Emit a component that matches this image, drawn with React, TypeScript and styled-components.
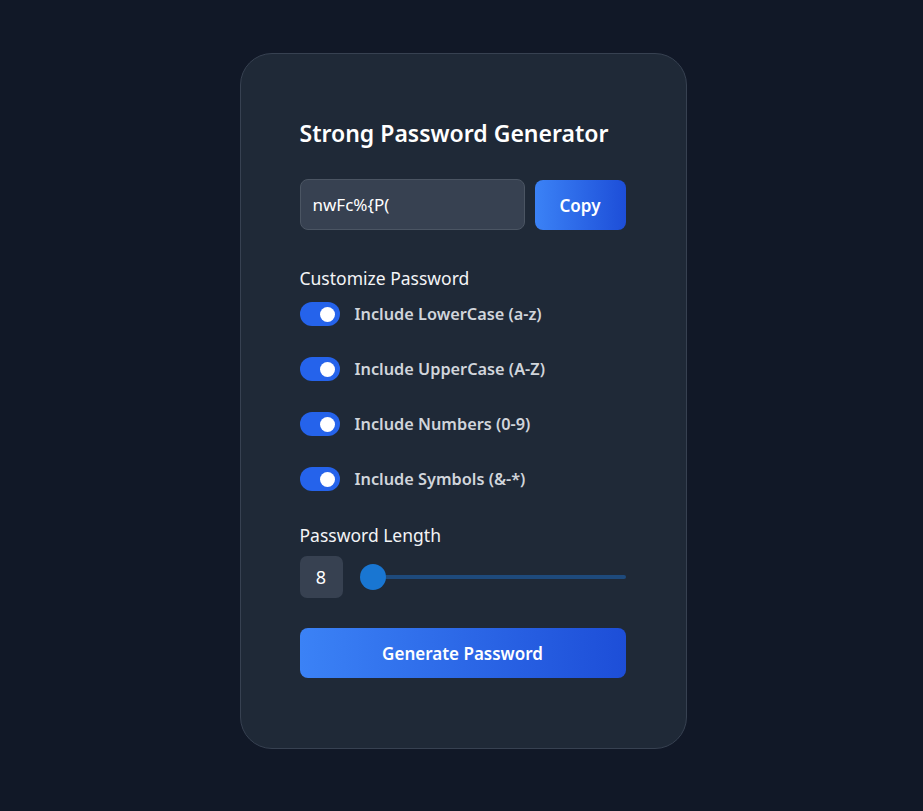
import React, { useState } from "react";
import styled, { createGlobalStyle } from "styled-components";

const Global = createGlobalStyle`
  html, body { margin: 0; padding: 0; background: #111827; }
  body { font-family: "Noto Sans", "Open Sans", sans-serif; }
  * { box-sizing: border-box; }
`;

const Page = styled.div`
  min-height: 811px;
  display: flex;
  justify-content: center;
  padding: 53px 0 0 3px;
`;

const Card = styled.div`
  width: 447px;
  height: 696px;
  background: #1f2937;
  border: 1px solid #374151;
  border-radius: 32px;
  padding: 59px 60px 0 59px;
  display: flex;
  flex-direction: column;
`;

const Title = styled.h1`
  margin: 0;
  font-size: 23px;
  font-weight: 600;
  color: #ffffff;
  line-height: 40px;
`;

const Row = styled.div`
  display: flex;
  gap: 10px;
  margin-top: 26px;
`;

const PwInput = styled.input`
  flex: 1;
  min-width: 0;
  height: 51px;
  background: #374151;
  border: 1px solid #4b5563;
  border-radius: 8px;
  color: #ffffff;
  font-family: inherit;
  font-size: 17px;
  padding: 0 12px;
  outline: none;
`;

const GradButton = styled.button<{ $wide?: boolean }>`
  height: 50px;
  width: ${(p) => (p.$wide ? "100%" : "91px")};
  margin-top: ${(p) => (p.$wide ? "30px" : "1px")};
  border: none;
  border-radius: 8px;
  background: linear-gradient(90deg, #3b82f6, #1d4ed8);
  color: #ffffff;
  font-family: inherit;
  font-size: 17px;
  font-weight: 600;
  cursor: pointer;
`;

const SectionLabel = styled.div<{ $top: number }>`
  margin-top: ${(p) => p.$top}px;
  font-size: 17.5px;
  color: #f3f4f6;
  line-height: 24px;
`;

const Options = styled.div`
  display: flex;
  flex-direction: column;
  gap: 31px;
  margin-top: 12px;
`;

const OptionRow = styled.label`
  display: flex;
  align-items: center;
  gap: 15px;
  cursor: pointer;
`;

const Toggle = styled.span<{ $on: boolean }>`
  width: 40px;
  height: 24px;
  border-radius: 12px;
  background: ${(p) => (p.$on ? "#2563eb" : "#4b5563")};
  display: flex;
  align-items: center;
  justify-content: ${(p) => (p.$on ? "flex-end" : "flex-start")};
  padding: 0 5px;
  flex-shrink: 0;
  &::after {
    content: "";
    width: 15px;
    height: 15px;
    border-radius: 50%;
    background: #ffffff;
  }
`;

const OptionText = styled.span`
  font-size: 16.3px;
  font-weight: 600;
  color: #d1d5db;
  line-height: 24px;
`;

const LengthRow = styled.div`
  display: flex;
  align-items: center;
  gap: 17px;
  margin-top: 9px;
`;

const LengthBox = styled.div`
  width: 43px;
  height: 42px;
  border-radius: 7px;
  background: #374151;
  color: #ffffff;
  font-size: 18px;
  display: flex;
  align-items: center;
  justify-content: center;
`;

const Track = styled.div`
  flex: 1;
  height: 26px;
  display: flex;
  align-items: center;
  position: relative;
`;

const Rail = styled.div`
  position: absolute;
  left: 13px;
  right: 0;
  height: 4px;
  border-radius: 2px;
  background: #1e4a7c;
`;

const Thumb = styled.div`
  position: relative;
  width: 26px;
  height: 26px;
  border-radius: 50%;
  background: #1976d2;
`;

const options = [
  "Include LowerCase (a-z)",
  "Include UpperCase (A-Z)",
  "Include Numbers (0-9)",
  "Include Symbols (&-*)",
];

export default function App() {
  const [on, setOn] = useState([true, true, true, true]);
  return (
    <>
      <Global />
      <Page>
        <Card>
          <Title>Strong Password Generator</Title>
          <Row>
            <PwInput readOnly value="nwFc%{P(" />
            <GradButton>Copy</GradButton>
          </Row>
          <SectionLabel $top={36}>Customize Password</SectionLabel>
          <Options>
            {options.map((o, i) => (
              <OptionRow
                key={o}
                onClick={() => setOn(on.map((v, j) => (j === i ? !v : v)))}
              >
                <Toggle $on={on[i]} />
                <OptionText>{o}</OptionText>
              </OptionRow>
            ))}
          </Options>
          <SectionLabel $top={32}>Password Length</SectionLabel>
          <LengthRow>
            <LengthBox>8</LengthBox>
            <Track>
              <Rail />
              <Thumb />
            </Track>
          </LengthRow>
          <GradButton $wide>Generate Password</GradButton>
        </Card>
      </Page>
    </>
  );
}
